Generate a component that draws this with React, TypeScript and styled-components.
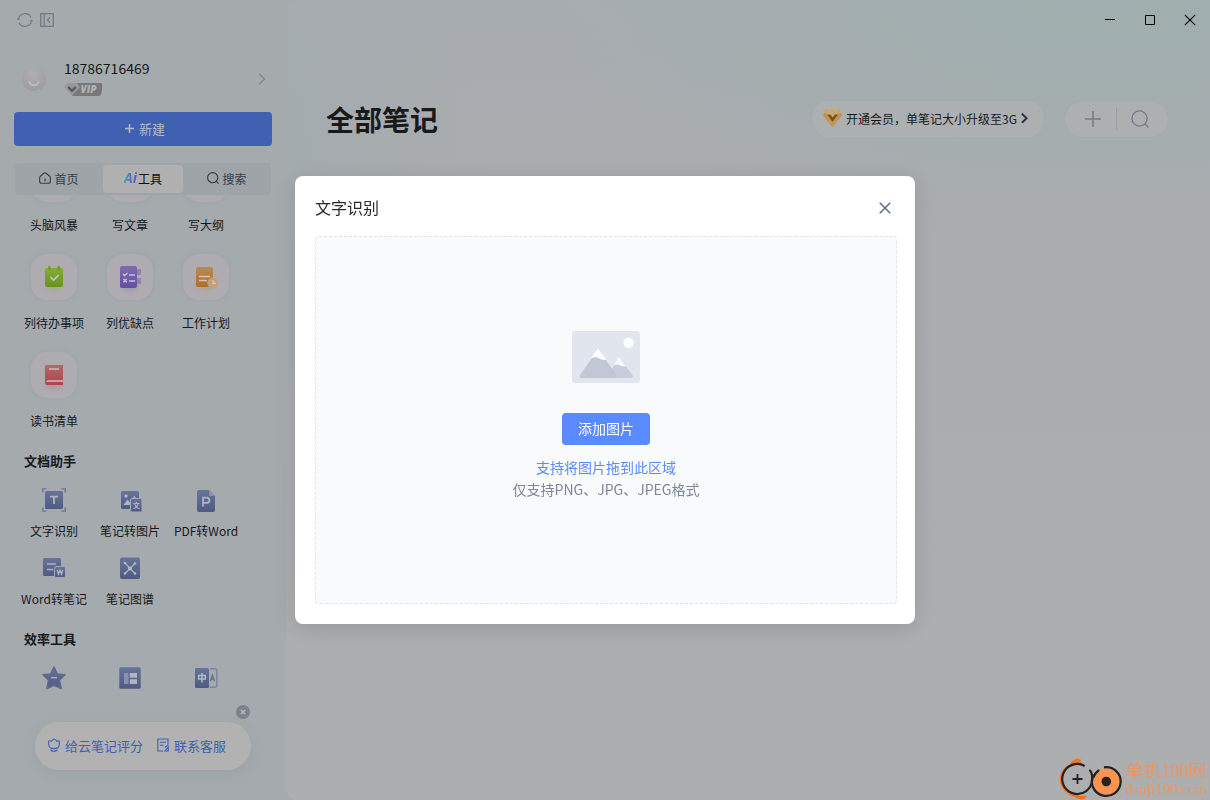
import React from "react";
import styled, { createGlobalStyle } from "styled-components";

const sans = `"Noto Sans CJK SC", "Noto Sans", sans-serif`;

const GlobalStyle = createGlobalStyle`
  * { box-sizing: border-box; }
  body { margin: 0; font-family: ${sans}; font-size: 12px; color: #17181b; background: #a4aaad; }
  button { font: inherit; color: inherit; border: 0; padding: 0; background: none; cursor: pointer; }
  a { color: inherit; text-decoration: none; }
  h1, h2, p { margin: 0; }
  svg { display: block; flex: none; }
`;

const Window = styled.div`
  display: grid;
  grid-template-columns: 286px 1fr;
  height: 100vh;
  background:
    radial-gradient(ellipse 500px 260px at 100% 0, #9fb0ae, transparent),
    linear-gradient(#a5abad, #a4aaad);
`;

const Sidebar = styled.aside`
  display: flex;
  flex-direction: column;
  min-height: 0;
  padding: 0 14px;
`;

const QuickBar = styled.div`
  display: flex;
  align-items: center;
  gap: 7px;
  height: 40px;
  padding-left: 3px;
  color: #747b88;
`;

const Account = styled.div`
  display: flex;
  align-items: center;
  height: 50px;
  margin: 10px 0 12px;
  padding: 8px 6px 0 8px;
`;

const AccountInfo = styled.div`
  flex: 1;
  display: flex;
  flex-direction: column;
  gap: 5px;
  margin-left: 18px;
  padding-bottom: 3px;
`;

const Phone = styled.span`
  font-size: 14px;
  line-height: 18px;
`;

const PrimaryButton = styled.button<{ $dim?: boolean }>`
  display: flex;
  align-items: center;
  justify-content: center;
  gap: 5px;
  flex: none;
  height: ${(p) => (p.$dim ? 34 : 32)}px;
  padding: ${(p) => (p.$dim ? "0 11px 2px 15px" : "0 16px 2px")};
  border-radius: 4px;
  background: ${(p) => (p.$dim ? "#4060b2" : "#5a8aff")};
  color: ${(p) => (p.$dim ? "#b4bac8" : "#ffffff")};
  font-size: ${(p) => (p.$dim ? 13 : 14)}px;
`;

const Tabs = styled.nav`
  display: flex;
  flex: none;
  height: 32px;
  margin: 17px 1px 0;
  padding: 2px 0;
  border-radius: 4px;
  background: #9fa4a9;
`;

const Tab = styled.button<{ $active?: boolean }>`
  display: flex;
  flex: ${(p) => (p.$active ? "0 0 80px" : "1")};
  align-items: center;
  justify-content: center;
  gap: ${(p) => (p.$active ? 1 : 3)}px;
  padding-bottom: 2px;
  border-radius: 4px;
  background: ${(p) => (p.$active ? "#b0b0b0" : "none")};
  color: ${(p) => (p.$active ? "#0d0f14" : "#353c4c")};
`;

const AiMark = styled.span`
  font: italic bold 14px/16px "Open Sans", sans-serif;
  background: linear-gradient(90deg, #3fa6b8, #4a6fc4 55%, #6a54bd);
  -webkit-background-clip: text;
  background-clip: text;
  color: transparent;
`;

const ToolList = styled.div`
  flex: 1;
  min-height: 0;
  overflow: hidden;
`;

const Scrolled = styled.div`
  margin-top: -39px;
  padding-left: 2px;
`;

const ToolGrid = styled.div<{ $gap: number }>`
  display: grid;
  grid-template-columns: repeat(3, 76px);
  row-gap: ${(p) => p.$gap}px;
  margin-bottom: 20px;
`;

const Tool = styled.button<{ $gap: number }>`
  display: flex;
  flex-direction: column;
  align-items: center;
  gap: ${(p) => p.$gap}px;
  line-height: 18px;
  white-space: nowrap;
`;

const Tile = styled.span`
  display: grid;
  place-items: center;
  width: 46px;
  height: 46px;
  border-radius: 16px;
  background: #aeacb0;
  box-shadow: 0 0 4px #99a3b0;
`;

const SectionTitle = styled.h2`
  margin: 0 0 16px 8px;
  font-size: 13px;
  line-height: 22px;
  font-weight: 600;
`;

const Footer = styled.footer`
  position: relative;
  flex: none;
  padding: 24px 21px 30px;
`;

const FooterPill = styled.div`
  display: flex;
  align-items: center;
  gap: 14px;
  height: 48px;
  padding: 0 0 2px 13px;
  border-radius: 24px;
  background: #b2b2b2;
  box-shadow: 0 4px 12px rgba(120, 135, 145, 0.18);
  color: #3e5fb4;
  font-size: 13px;
`;

const FooterLink = styled.a`
  display: flex;
  align-items: center;
  gap: 5px;
`;

const Dismiss = styled.button`
  position: absolute;
  top: 7px;
  right: 22px;
`;

const Main = styled.main`
  min-width: 0;
  border-radius: 12px 0 0 12px;
  background:
    radial-gradient(ellipse 560px 240px at 88% 0, #9faeae, rgba(159, 174, 174, 0)),
    radial-gradient(ellipse 200px 500px at 0 20%, #a4abae, rgba(164, 171, 174, 0)),
    linear-gradient(#a7acb0, #abacaf 35%, #adaeaf);
`;

const WindowControls = styled.div`
  display: flex;
  justify-content: flex-end;
  height: 40px;
`;

const ControlButton = styled.button`
  display: grid;
  place-items: center;
  width: 40px;
  color: #000000;
`;

const PageHeader = styled.header`
  display: flex;
  align-items: center;
  height: 36px;
  margin: 61px 41px 0 40px;
`;

const PageTitle = styled.h1`
  flex: 1;
  font-size: 28px;
  line-height: 36px;
  font-weight: 700;
  color: #191a1c;
`;

const Promo = styled.a`
  display: flex;
  align-items: center;
  gap: 4px;
  height: 36px;
  padding: 0 16px 2px 11px;
  border-radius: 18px;
  background: #adb0b1;
`;

const Actions = styled.div`
  display: flex;
  align-items: center;
  height: 38px;
  width: 105px;
  margin-left: 20px;
  padding: 0 3px;
  border: 1px solid #a6a9ae;
  border-radius: 19px;
  background: #adb0b0;
  color: #747b88;
`;

const ActionButton = styled.button`
  flex: 1;
  display: grid;
  place-items: center;
  height: 22px;
  padding-left: 2px;
  & + & { padding: 0 2px 0 0; border-left: 1px solid #9ca0a6; }
`;

const Backdrop = styled.div`
  position: fixed;
  inset: 0;
  display: grid;
  place-items: center;
`;

const Dialog = styled.section`
  width: 620px;
  max-width: 100%;
  padding: 0 18px 20px 20px;
  border-radius: 8px;
  background: #ffffff;
  box-shadow: 0 4px 20px rgba(0, 0, 0, 0.12);
`;

const DialogHeader = styled.header`
  display: flex;
  align-items: center;
  justify-content: space-between;
  height: 60px;
  padding: 4px 6px 0 0;
`;

const DialogTitle = styled.h2`
  padding-bottom: 2px;
  font-size: 16px;
  line-height: 24px;
  font-weight: 400;
  color: #262a33;
`;

const DropZone = styled.div`
  display: flex;
  flex-direction: column;
  align-items: center;
  justify-content: center;
  height: 368px;
  padding-bottom: 8px;
  border: 1px dashed #dfe3ec;
  border-radius: 4px;
  background: #f9fafc;
`;

const DropHint = styled.p`
  margin-top: 11px;
  padding-bottom: 1px;
  font-size: 14px;
  line-height: 22px;
  text-align: center;
  color: #7d879a;
`;

const DropLead = styled.span`
  display: block;
  color: #5a8aff;
`;

const AddButton = styled(PrimaryButton)`
  margin-top: 30px;
`;

const Watermark = styled.div`
  position: fixed;
  right: 3px;
  bottom: 0;
  display: flex;
  align-items: center;
  gap: 2px;
  color: #f0935f;
`;

const WatermarkText = styled.div`
  font: 18px/20px "Liberation Serif", "Noto Sans CJK SC", serif;
  white-space: nowrap;
`;

const WatermarkSite = styled.div`
  font-size: 15px;
  line-height: 16px;
`;

const RefreshIcon = () => (
  <svg width="16" height="16" viewBox="0 0 16 16" fill="none" stroke="currentColor" strokeWidth="1.2">
    <path d="M1.500 8A6.500 6.500 0 0 1 14 5.600M14.500 8A6.500 6.500 0 0 1 2 10.400M.2 7.200h2.600M13.200 8.800h2.600" />
  </svg>
);

const CollapseIcon = () => (
  <svg width="14" height="14" viewBox="0 0 14 14" fill="none" stroke="currentColor" strokeWidth="1.3">
    <path d="M.7.7h12.600v12.600H.7zM4.200.7v12.600M9.800 4.300 7.500 7l2.300 2.700" />
  </svg>
);

const Avatar = () => (
  <svg width="24" height="26" viewBox="0 0 24 26">
    <defs>
      <radialGradient id="face" cx=".45" cy=".3" r=".75">
        <stop offset="0" stopColor="#b0afb0" />
        <stop offset="1" stopColor="#9b9b9f" />
      </radialGradient>
    </defs>
    <circle cx="12" cy="13" r="12" fill="url(#face)" />
    <path d="M7.500 16.200a4.700 4.200 0 0 0 9 0" fill="none" stroke="#bcbcbe" strokeWidth="2" strokeLinecap="round" />
  </svg>
);

const VipBadge = () => (
  <svg width="39" height="15" viewBox="0 0 39 15" role="img" aria-label="VIP">
    <path d="M12 1h24q2.500 0 2.300 2.500l-.8 8q-.3 2.500-2.800 2.500H8z" fill="#77787a" />
    <path d="M3 1h10l3 4.200-8 8.300-8-8.300z" fill="#98999b" />
    <path d="m4.200 5 3.800 3.800L11.800 5" fill="none" stroke="#59595c" strokeWidth="2.400" />
    <text x="16.500" y="11" fontFamily="Open Sans" fontSize="10" fontWeight="800" fontStyle="italic" fill="#b3b3b5">VIP</text>
  </svg>
);

const Chevron = ({ size, color, weight }: { size: number; color: string; weight: number }) => (
  <svg width={size} height={size * 1.5} viewBox="0 0 8 12" fill="none" stroke={color} strokeWidth={weight}>
    <path d="m1 .8 5.500 5.200L1 11.200" />
  </svg>
);

const PlusIcon = ({ size, weight }: { size: number; weight: number }) => (
  <svg width={size} height={size} viewBox={`0 0 ${size} ${size}`} stroke="currentColor" strokeWidth={weight}>
    <path d={`M${size / 2} 0v${size}M0 ${size / 2}h${size}`} />
  </svg>
);

const HomeIcon = () => (
  <svg width="12" height="12" viewBox="0 0 12 12" fill="none" stroke="currentColor" strokeWidth="1.100">
    <path d="M.6 6.200Q.6 4.600 1.800 3.700L5 1.200q1-.8 2 0l3.200 2.500q1.200.9 1.200 2.500v3q0 2-2 2H2.600q-2 0-2-2zM6 6.500v3" />
  </svg>
);

const SearchIcon = ({ size, weight }: { size: number; weight: number }) => (
  <svg width={size} height={size} viewBox="0 0 18 18" fill="none" stroke="currentColor" strokeWidth={weight}>
    <circle cx="8.500" cy="8.500" r="7.600" />
    <path d="m13.800 13.800 3.600 3.600" />
  </svg>
);

const CrossIcon = ({ size, color, weight }: { size: number; color: string; weight: number }) => (
  <svg width={size} height={size} viewBox="0 0 12 12" stroke={color} strokeWidth={weight}>
    <path d="m.8.8 10.400 10.400M11.200.8.8 11.200" />
  </svg>
);

const Gradient = ({ id, from, to }: { id: string; from: string; to: string }) => (
  <linearGradient id={id} x1="0" y1="0" x2="0" y2="1">
    <stop offset="0" stopColor={from} />
    <stop offset="1" stopColor={to} />
  </linearGradient>
);

const SoftEllipse = styled.ellipse`
  opacity: 0.22;
  filter: blur(2px);
`;

const Glow = ({ color }: { color: string }) => <SoftEllipse cx="13" cy="23" rx="8" ry="4" fill={color} />;

const TodoIcon = () => (
  <svg width="26" height="26" viewBox="0 0 26 26" overflow="visible">
    <defs><Gradient id="todo" from="#86ab38" to="#689321" /></defs>
    <Glow color="#7cab20" />
    <rect x="4" y="4" width="18" height="19" rx="2" fill="url(#todo)" />
    <rect x="7" y="2" width="2.500" height="4.500" rx="1.200" fill="#6b9b28" />
    <rect x="16.500" y="2" width="2.500" height="4.500" rx="1.200" fill="#6b9b28" />
    <path d="m9.500 13 3 3 5-4.800" fill="none" stroke="#c2cbb6" strokeWidth="1.700" />
  </svg>
);

const ProsConsIcon = () => (
  <svg width="26" height="26" viewBox="0 0 26 26" overflow="visible">
    <defs><Gradient id="pros" from="#7d6bb2" to="#644fa0" /></defs>
    <Glow color="#6b50b0" />
    <path d="M17 5h7v6h-7zM17 14h7v6h-7z" fill="#9284b2" />
    <rect x="3" y="2" width="17" height="22" rx="2" fill="url(#pros)" />
    <path d="m6 10 1.500 1.500L10.500 9M12 11h6M6.500 15l3.200 3.200m0-3.200-3.200 3.200M12 17h6" fill="none" stroke="#c6c2d2" strokeWidth="1.500" />
  </svg>
);

const PlanIcon = () => (
  <svg width="26" height="26" viewBox="0 0 26 26" overflow="visible">
    <defs><Gradient id="plan" from="#ba8a54" to="#ae6e28" /></defs>
    <Glow color="#c08040" />
    <rect x="3" y="3" width="17" height="20" rx="1.500" fill="url(#plan)" />
    <path d="M6 12.500h11M6 16.500h8" stroke="#d2c3b4" strokeWidth="1.500" />
    <circle cx="20" cy="19" r="5.200" fill="#c3a078" stroke="#b3a593" />
    <path d="M20 16v3.300h3" fill="none" stroke="#d3c9bd" strokeWidth="1.200" />
  </svg>
);

const BookIcon = () => (
  <svg width="26" height="26" viewBox="0 0 26 26" overflow="visible">
    <defs><Gradient id="book" from="#b8646c" to="#b0434e" /></defs>
    <Glow color="#c84858" />
    <path d="M4 4.500Q4 3 5.500 3H22v20H6.500Q4 23 4 20.500z" fill="url(#book)" />
    <path d="M8 7h10" stroke="#d0babd" strokeWidth="1.500" />
    <path d="M22 19H7.500q-1.300 0-1.300 1" fill="none" stroke="#d0babd" strokeWidth="1.600" />
  </svg>
);

const DocSvg = ({ children }: { children: React.ReactNode }) => (
  <svg width="24" height="24" viewBox="0 0 24 24">
    <defs><Gradient id="slate" from="#68739a" to="#4f5b80" /></defs>
    {children}
  </svg>
);

const OcrIcon = () => (
  <DocSvg>
    <path d="M.8 4.500V.8h3.700M19.500.8h3.700v3.700M23.200 19.500v3.700h-3.700M4.500 23.200H.8v-3.700" fill="none" stroke="#727d9d" strokeWidth="1.600" />
    <rect x="3" y="3" width="18" height="18" rx="1.500" fill="url(#slate)" />
    <path d="M8 8.700h8M12 8.500V16" stroke="#afb4c1" strokeWidth="1.800" />
  </DocSvg>
);

const NoteToImageIcon = () => (
  <DocSvg>
    <rect x="3" y="3" width="18" height="18" rx="1.500" fill="url(#slate)" />
    <circle cx="8" cy="8" r="1.700" fill="#b0b5c0" />
    <path d="m5.500 17 4-5.500 2.500 3v2.500zM14.500 9.500l2-1.500 1.500 2z" fill="#b0b5c0" />
    <rect x="12.500" y="10.500" width="11.500" height="13.500" rx="1.500" fill="url(#slate)" stroke="#a4aaad" />
    <text x="18.200" y="20" textAnchor="middle" fontFamily="Noto Sans CJK SC" fontSize="7" fontWeight="700" fill="#b8bcc6">文</text>
  </DocSvg>
);

const PdfIcon = () => (
  <DocSvg>
    <path d="M3 4q0-2 2-2h10l6 6v14q0 2-2 2H5q-2 0-2-2z" fill="url(#slate)" />
    <path d="M15 2l6 6h-4.500Q15 8 15 6.500z" fill="#8b93ab" />
    <path d="M9 18.500V9.700h3.800a2.600 2.600 0 0 1 0 5.200H9" fill="none" stroke="#b0b5c1" strokeWidth="1.800" />
  </DocSvg>
);

const WordToNoteIcon = () => (
  <DocSvg>
    <rect x="1" y="2" width="18" height="18" rx="1.500" fill="url(#slate)" />
    <path d="M5 8h9M5 13.500h6" stroke="#afb4c1" strokeWidth="1.600" />
    <rect x="12.500" y="10.500" width="11" height="11" rx="1.500" fill="url(#slate)" stroke="#a4aaad" />
    <path d="m15.300 14 1.200 4.200 1.500-4 1.500 4 1.200-4.200" fill="none" stroke="#b8bcc6" strokeWidth="1.200" />
  </DocSvg>
);

const GraphIcon = () => (
  <DocSvg>
    <rect x="2" y="1.500" width="20" height="21.500" rx="2" fill="url(#slate)" />
    <path d="m7 7 10 10.500M17 7.500l-10 10" stroke="#afb4c1" strokeWidth="1.200" />
    <g fill="#b4b9c4">
      <circle cx="12" cy="12.500" r="2" /><circle cx="7" cy="7" r="1.300" /><circle cx="17" cy="7.500" r="1.300" />
      <circle cx="7" cy="17.500" r="1.300" /><circle cx="17" cy="17.500" r="1.300" />
    </g>
  </DocSvg>
);

const StarIcon = () => (
  <DocSvg>
    <path d="m12 1 3.300 7 7.700.8-5.600 5.400L19.200 22.500 12 19.200l-7.200 3.300 1.800-8.300L1 8.800 8.700 8z" fill="url(#slate)" stroke="#5f6a8f" strokeWidth="1.500" strokeLinejoin="round" />
    <path d="M9 11.700h6" stroke="#a9afbf" strokeWidth="1.400" />
  </DocSvg>
);

const TemplateIcon = () => (
  <DocSvg>
    <rect x="1.300" y="1.300" width="21.400" height="21.400" rx="1.500" fill="url(#slate)" />
    <path d="M6 7h4.500v11H6z" fill="#8790ae" />
    <path d="M11.800 7H19v4.800h-7.200zM11.800 13.200H19V18h-7.200z" fill="#b0b4bf" />
  </DocSvg>
);

const TranslateIcon = () => (
  <DocSvg>
    <rect x="1" y="2" width="14" height="20" rx="1.500" fill="url(#slate)" />
    <path d="M16 2.700h5q1.800 0 1.800 1.800v15q0 1.800-1.800 1.800h-5" fill="none" stroke="#7a84a2" strokeWidth="1.400" />
    <path d="M4.700 9.500h6.600V13H4.700zM8 7v9.500" fill="none" stroke="#b4b9c4" strokeWidth="1.500" />
    <path d="m16.500 15 2-6 2 6M17.200 13h2.700" fill="none" stroke="#66708f" strokeWidth="1.300" />
  </DocSvg>
);

const RateIcon = () => (
  <svg width="12" height="14" viewBox="0 0 12 14" fill="none" stroke="currentColor" strokeWidth="1.100">
    <path d="M3.300 3.300Q4.200 1.500 6 .9 7.800 1.500 8.700 3.300q1.300-.8 2.600-.3v3.200Q11.300 10.600 6 10.600T.7 6.200V3q1.300-.5 2.600.3zM2.500 11.800q3.500 2.800 7 0M3.500 13.300h5" />
  </svg>
);

const ServiceIcon = () => (
  <svg width="12" height="14" viewBox="0 0 12 14" fill="none" stroke="currentColor" strokeWidth="1.100">
    <path d="M11 6V1H.8v12H6M3 4.300h6M3 7.300h3.500M8 9.500l3.500-3M11.300 9v4H8z" />
  </svg>
);

const DismissIcon = () => (
  <svg width="14" height="14" viewBox="0 0 14 14">
    <circle cx="7" cy="7" r="7" fill="#7c838b" />
    <path d="m4.700 4.700 4.600 4.600m0-4.600L4.700 9.300" stroke="#b5b8bb" strokeWidth="1.400" />
  </svg>
);

const DiamondIcon = () => (
  <svg width="19" height="19" viewBox="0 0 20 20">
    <defs><Gradient id="gem" from="#c08f45" to="#bd9a68" /></defs>
    <path d="M4.500 0h11q1 0 1.500.7l2.500 5q.6 1-.2 2L11 18.500q-1 1-2 0L.7 7.700q-.8-1-.2-2l2.500-5Q3.500 0 4.500 0z" fill="url(#gem)" />
    <path d="M1.500 4.500 4 0h12l2.500 4.500-5 .8L10 9 6.500 5.300z" fill="#c8a877" />
    <path d="M4.500 6H8l2 3.200L12 6h3.500L10 13.500z" fill="#7d5010" />
  </svg>
);

const PictureIcon = () => (
  <svg width="68" height="52" viewBox="0 0 68 52">
    <rect width="68" height="52" rx="3" fill="#e1e5ed" />
    <circle cx="56.700" cy="11.700" r="5.300" fill="#fbfcfe" />
    <path d="M45.500 28.500q1.500-3 3 0L60.500 44q1.500 3-1.500 3H35z" fill="#c7cddb" />
    <path d="m47 26 6.700 9q-3 1-5.500-.4-3-1.800-6.800-.5z" fill="#f7f9fc" />
    <path d="M24.500 20.500q1.500-3 3 0L44 43q2 4-1 4H10q-3.500 0-1.500-3.500z" fill="#c1c7d5" />
    <path d="m26 17.300 8.300 11.400q-3.500 1-7-1.200-3.800-2.200-8.500-.2z" fill="#fbfcfe" />
  </svg>
);

const WatermarkLogo = () => (
  <svg width="64" height="42" viewBox="0 0 64 42" fill="none">
    <path d="M22 4.500Q2.500 7 2 21q0 13.500 17 18" stroke="#ee7420" strokeWidth="2.200" />
    <path d="M11 5.500Q15 .5 19 .3q2.500.2 3.500 3.200-5.500 0-11.500 3zM13 36q7 3 15 1.500-1 4-6 4-6-1-9-5.500z" fill="#ee7420" />
    <path d="M25.700 8A15 15 0 1 0 33.200 22" stroke="#29211f" strokeWidth="2.200" />
    <circle cx="47.300" cy="23.500" r="13" fill="#fa9450" />
    <path d="M31 12.500q2.300 2.500 2.300 9.500M39.500 12.500Q36 15 34.700 19" stroke="#29211f" strokeWidth="2.200" strokeLinecap="round" />
    <path d="M45 9.300A14.400 14.400 0 1 1 34.700 16.500" stroke="#29211f" strokeWidth="2.200" />
    <path d="M18.500 16v10M13.500 21h10" stroke="#29211f" strokeWidth="1.800" />
    <circle cx="47.300" cy="23.500" r="4.800" fill="#29211f" />
  </svg>
);

const Minimize = () => (
  <svg width="10" height="10" viewBox="0 0 10 10"><path d="M0 4.500h10" stroke="currentColor" /></svg>
);
const Maximize = () => (
  <svg width="10" height="10" viewBox="0 0 10 10"><path d="M.5.5h9v9h-9z" fill="none" stroke="currentColor" /></svg>
);

type Item = { label: string; icon?: React.ReactNode };

const writing: Item[] = [
  { label: "头脑风暴" },
  { label: "写文章" },
  { label: "写大纲" },
  { label: "列待办事项", icon: <TodoIcon /> },
  { label: "列优缺点", icon: <ProsConsIcon /> },
  { label: "工作计划", icon: <PlanIcon /> },
  { label: "读书清单", icon: <BookIcon /> },
];

const documents: Item[] = [
  { label: "文字识别", icon: <OcrIcon /> },
  { label: "笔记转图片", icon: <NoteToImageIcon /> },
  { label: "PDF转Word", icon: <PdfIcon /> },
  { label: "Word转笔记", icon: <WordToNoteIcon /> },
  { label: "笔记图谱", icon: <GraphIcon /> },
];

const efficiency = [
  { name: "star", icon: <StarIcon /> },
  { name: "template", icon: <TemplateIcon /> },
  { name: "translate", icon: <TranslateIcon /> },
];

export default function App() {
  return (
    <>
      <GlobalStyle />
      <Window>
        <Sidebar>
          <QuickBar>
            <button aria-label="同步"><RefreshIcon /></button>
            <button aria-label="收起"><CollapseIcon /></button>
          </QuickBar>
          <Account>
            <Avatar />
            <AccountInfo>
              <Phone>18786716469</Phone>
              <VipBadge />
            </AccountInfo>
            <Chevron size={8} color="#7f858d" weight={1.2} />
          </Account>
          <PrimaryButton $dim>
            <PlusIcon size={9} weight={1.5} />
            新建
          </PrimaryButton>
          <Tabs>
            <Tab><HomeIcon />首页</Tab>
            <Tab $active><AiMark>Ai</AiMark>工具</Tab>
            <Tab><SearchIcon size={12} weight={1.7} />搜索</Tab>
          </Tabs>
          <ToolList>
            <Scrolled>
              <ToolGrid $gap={20}>
                {writing.map((t) => (
                  <Tool key={t.label} $gap={14}>
                    <Tile>{t.icon}</Tile>
                    {t.label}
                  </Tool>
                ))}
              </ToolGrid>
              <SectionTitle>文档助手</SectionTitle>
              <ToolGrid $gap={16}>
                {documents.map((t) => (
                  <Tool key={t.label} $gap={10}>
                    {t.icon}
                    {t.label}
                  </Tool>
                ))}
              </ToolGrid>
              <SectionTitle>效率工具</SectionTitle>
              <ToolGrid $gap={16}>
                {efficiency.map((t) => (
                  <Tool key={t.name} $gap={10}>{t.icon}</Tool>
                ))}
              </ToolGrid>
            </Scrolled>
          </ToolList>
          <Footer>
            <FooterPill>
              <FooterLink href="#rate"><RateIcon />给云笔记评分</FooterLink>
              <FooterLink href="#service"><ServiceIcon />联系客服</FooterLink>
            </FooterPill>
            <Dismiss aria-label="关闭提示"><DismissIcon /></Dismiss>
          </Footer>
        </Sidebar>
        <Main>
          <WindowControls>
            <ControlButton aria-label="最小化"><Minimize /></ControlButton>
            <ControlButton aria-label="最大化"><Maximize /></ControlButton>
            <ControlButton aria-label="关闭"><CrossIcon size={12} color="#000" weight={1.1} /></ControlButton>
          </WindowControls>
          <PageHeader>
            <PageTitle>全部笔记</PageTitle>
            <Promo href="#vip">
              <DiamondIcon />
              <span>开通会员，单笔记大小升级至3G</span>
              <Chevron size={7} color="#2b3045" weight={2.2} />
            </Promo>
            <Actions>
              <ActionButton aria-label="新建"><PlusIcon size={16} weight={1.5} /></ActionButton>
              <ActionButton aria-label="搜索"><SearchIcon size={18} weight={1.4} /></ActionButton>
            </Actions>
          </PageHeader>
        </Main>
      </Window>
      <Backdrop>
        <Dialog role="dialog" aria-labelledby="dialog-title">
          <DialogHeader>
            <DialogTitle id="dialog-title">文字识别</DialogTitle>
            <button aria-label="关闭"><CrossIcon size={12} color="#626d86" weight={1.6} /></button>
          </DialogHeader>
          <DropZone>
            <PictureIcon />
            <AddButton>添加图片</AddButton>
            <DropHint>
              <DropLead>支持将图片拖到此区域</DropLead>
              仅支持PNG、JPG、JPEG格式
            </DropHint>
          </DropZone>
        </Dialog>
      </Backdrop>
      <Watermark>
        <WatermarkLogo />
        <WatermarkText>
          单机100网
          <WatermarkSite>danji100.com</WatermarkSite>
        </WatermarkText>
      </Watermark>
    </>
  );
}
